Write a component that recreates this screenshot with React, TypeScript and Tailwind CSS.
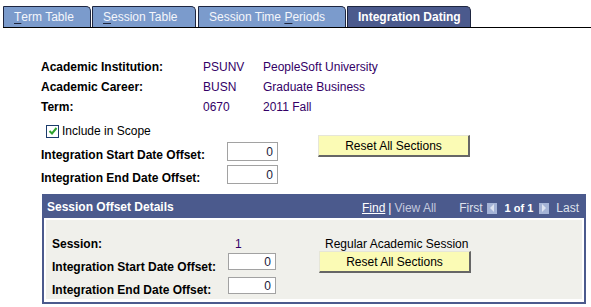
import React from "react";

const font = { fontFamily: '"Liberation Sans", Arial, sans-serif' };

function Tab({ children, w, ml, active }: { children: React.ReactNode; w: string; ml: string; active?: boolean }) {
  return (
    <div
      className={`${w} ${ml} h-[21px] flex items-center pl-[10px] border-l border-t border-r border-[#1e2640] rounded-tr-[5px] rounded-tl-[1px] text-[12px] leading-[14px] ${
        active ? "bg-[#4b5a8d] text-white font-bold" : "bg-[#7b9bcc] text-[#f4f6fb]"
      }`}
    >
      {children}
    </div>
  );
}

function U({ children }: { children: React.ReactNode }) {
  return <span className="underline decoration-[#1e2640] underline-offset-[2px]">{children}</span>;
}

function ResetButton() {
  return (
    <div className="w-[152px] h-[22px] bg-[#fbfbb5] border-t border-l border-t-[#e6e6d8] border-l-[#e6e6d8] border-b-2 border-r-2 border-b-[#666] border-r-[#666] flex items-center justify-center text-[12px] leading-[14px] text-black">
      Reset All Sections
    </div>
  );
}

function NumInput({ w, h }: { w: string; h: string }) {
  return (
    <div className={`${w} ${h} bg-white border border-[#a2a2a2] flex items-center justify-end pr-[4px] text-[12px] leading-[14px] text-[#1a1a3a]`}>
      0
    </div>
  );
}

function Arrow({ dir }: { dir: "left" | "right" }) {
  return (
    <div className="w-[10px] h-[11px] bg-[#a4b3d6] flex items-center justify-center">
      <svg width="6" height="8" viewBox="0 0 6 8">
        {dir === "left" ? (
          <polygon points="5,0 5,8 1,4" fill="#dde3f1" />
        ) : (
          <polygon points="1,0 1,8 5,4" fill="#dde3f1" />
        )}
      </svg>
    </div>
  );
}

export default function App() {
  const label = "font-bold text-[12px] leading-[14px] text-black";
  const value = "text-[12px] leading-[14px] text-[#330066]";
  return (
    <div className="w-[591px] h-[307px] bg-white overflow-hidden" style={font}>
      {/* Tabs */}
      <div className="ml-[3px] h-[28px] pt-[6px] border-b border-black flex items-end">
        <Tab w="w-[88px]" ml="ml-0">
          <U>T</U>erm Table
        </Tab>
        <Tab w="w-[104px]" ml="ml-[1px]">
          <U>S</U>ession Table
        </Tab>
        <Tab w="w-[148px]" ml="ml-[2px]">
          Session Time&nbsp;<U>P</U>eriods
        </Tab>
        <Tab w="w-[124px]" ml="ml-[1px]" active>
          Integration Dating
        </Tab>
      </div>

      {/* Top block */}
      <div className="pl-[41px] pt-[29px]">
        {[
          ["Academic Institution:", "PSUNV", "PeopleSoft University"],
          ["Academic Career:", "BUSN", "Graduate Business"],
          ["Term:", "0670", "2011 Fall"],
        ].map(([l, c, d]) => (
          <div key={l} className="h-[20px] flex items-center">
            <div className={`w-[162px] ${label}`}>{l}</div>
            <div className={`w-[60px] ${value}`}>{c}</div>
            <div className={value}>{d}</div>
          </div>
        ))}

        <div className="flex">
          <div className="w-[277px]">
            <div className="mt-[4px] h-[20px] flex items-center pl-[5px]">
              <div className="w-[13px] h-[13px] border border-[#1c3c6c] bg-white flex items-center justify-center">
                <svg width="10" height="10" viewBox="0 0 10 10">
                  <path d="M1.5 5 L4 7.5 L8.5 2" stroke="#2ea22e" strokeWidth="2" fill="none" />
                </svg>
              </div>
              <span className="ml-[3px] text-[12px] leading-[14px] text-black">Include in Scope</span>
            </div>
            <div className="mt-[1px] flex items-start">
              <div className={`w-[186px] pt-[6px] ${label}`}>Integration Start Date Offset:</div>
              <NumInput w="w-[51px]" h="h-[19px]" />
            </div>
            <div className="mt-[3px] flex items-start">
              <div className={`w-[186px] pt-[6px] ${label}`}>Integration End Date Offset:</div>
              <NumInput w="w-[51px]" h="h-[19px]" />
            </div>
          </div>
          <div className="mt-[18px]">
            <ResetButton />
          </div>
        </div>

        {/* Session Offset Details */}
        <div className="ml-[1px] mt-[9px] w-[544px] border-2 border-[#4b5a8d]">
          <div className="h-[22px] bg-[#4b5a8d] flex items-center justify-between pl-[3px] pr-[5px]">
            <span className="font-bold text-[12px] leading-[14px] text-white">Session Offset Details</span>
            <div className="flex items-center text-[12px] leading-[14px] pt-[2px]">
              <span className="text-white underline">Find</span>
              <span className="text-white mx-[3px]">|</span>
              <span className="text-[#c3c9de]">View All</span>
              <span className="text-[#dde1ec] ml-[23px]">First</span>
              <span className="ml-[4px]">
                <Arrow dir="left" />
              </span>
              <span className="ml-[8px] text-white font-bold text-[11px]">1 of 1</span>
              <span className="ml-[6px]">
                <Arrow dir="right" />
              </span>
              <span className="text-[#dde1ec] ml-[7px]">Last</span>
            </div>
          </div>
          <div className="bg-white p-[2px] pb-[3px]">
            <div className="h-[79px] bg-[#f0f0eb] pl-[6px] pt-[17px]">
              <div className="h-[14px] flex items-center">
                <div className={`w-[183px] ${label}`}>Session:</div>
                <div className={`w-[90px] ${value}`}>1</div>
                <div className="text-[12px] leading-[14px] text-black">Regular Academic Session</div>
              </div>
              <div className="flex">
                <div className="w-[267px] pt-[2px]">
                  <div className="flex items-start">
                    <div className={`w-[176px] pt-[7px] ${label}`}>Integration Start Date Offset:</div>
                    <NumInput w="w-[48px]" h="h-[17px]" />
                  </div>
                  <div className="mt-[3px] flex items-start">
                    <div className={`w-[176px] pt-[6px] ${label}`}>Integration End Date Offset:</div>
                    <NumInput w="w-[48px]" h="h-[17px]" />
                  </div>
                </div>
                <div>
                  <ResetButton />
                </div>
              </div>
            </div>
          </div>
        </div>
      </div>
    </div>
  );
}
